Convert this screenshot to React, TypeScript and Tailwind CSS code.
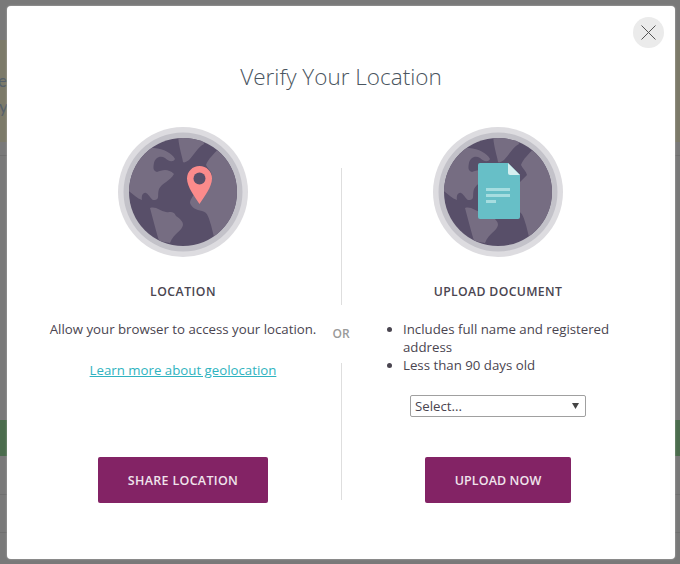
import React from "react";

const Globe = ({ id, children }: { id: string; children?: React.ReactNode }) => (
  <svg width="130" height="130" viewBox="0 0 130 130">
    <defs>
      <clipPath id={id}>
        <circle cx="65" cy="65" r="54" />
      </clipPath>
    </defs>
    <circle cx="65" cy="65" r="65" fill="#dddce0" />
    <circle cx="65" cy="65" r="59.5" fill="#c3c2c9" />
    <circle cx="65" cy="65" r="54" fill="#584f69" />
    <g clipPath={`url(#${id})`} fill="#766d82">
      <path d="M60 8 L85 8 L86 17 C80 20 76 28 71 33 C68 35 66 36 65 35 C64 28 61 22 60 8Z" />
      <path d="M100 22 C96 27 90 32 88 38 C90 42 93 44 94 48 L80 62 C76 68 72 72 72 76 C74 81 78 83 84 84 C90 85 91 92 93 98 L96 110 L125 110 L125 20Z" />
      <path d="M8 62 L8 20 L30 20 L36 21 C46 22 54 26 57 32 C55 36 50 34 47 31 C42 28 37 31 36 36 C35 41 35 44 39 45 C44 43 50 41 56 47 C52 54 44 56 41 62 C39 68 42 72 37 73 C33 74 32 68 28 66 C25 65 23 69 24 73 C18 71 14 66 8 62Z" />
      <path d="M32 81 C38 79 42 84 48 85 C52 86 55 83 58 89 C62 92 65 94 65 98 C64 104 56 106 52 116 L41 114 C38 104 35 92 32 81Z" />
    </g>
    {children}
  </svg>
);

export default function App() {
  return (
    <div className="relative h-[564px] w-[680px] overflow-hidden bg-[#797979] font-['Open_Sans',sans-serif]">
      <div className="h-[40px]" />
      <div className="h-[102px] bg-[#7c7a69] pt-[28px] pl-[1px] font-['Lato',sans-serif] text-[17px] leading-[26px] text-[#55606b]">
        <p className="-ml-[3px]">e</p>
        <p className="-ml-[2px]">y</p>
      </div>
      <div className="mt-[13px] h-px bg-[#6f6f6f]" />
      <div className="mt-[264px] h-[36px] bg-[#4b6c4d]" />
      <div className="mt-[38px] h-px bg-[#6f6f6f]" />
      <div className="mt-[37px] h-px bg-[#6f6f6f]" />

      {/* dialog */}
      <div className="absolute left-[7px] top-[6px] flex h-[553px] w-[668px] flex-col rounded-[4px] bg-white px-[23px] shadow-[0_0_2px_rgba(255,255,255,0.5)]">
        <button className="absolute right-[11px] top-[11px] flex h-[31px] w-[31px] items-center justify-center rounded-full bg-[#ebebeb]">
          <svg width="15" height="15" viewBox="0 0 15 15" stroke="#555" strokeWidth="1" fill="none">
            <path d="M0.5 0.5 L14.5 14.5 M14.5 0.5 L0.5 14.5" />
          </svg>
        </button>

        <h1 className="mt-[54px] text-center font-['Open_Sans',sans-serif] text-[22.5px] font-light leading-[34px] text-[#4a5560]">
          Verify Your Location
        </h1>

        <div className="mt-[33px] flex flex-1 text-[13.25px] leading-[18px] text-[#4a4550]">
          <section className="flex w-[306px] flex-col items-center">
            <Globe id="globe-a">
              <path
                d="M81.5 39 C74.5 39 69 44.5 69 51.5 C69 60 77 70 81.5 77 C86 70 94 60 94 51.5 C94 44.5 88.5 39 81.5 39Z"
                fill="#fb8b8b"
              />
              <circle cx="81.5" cy="51.5" r="6" fill="#584f69" />
            </Globe>
            <h2 className="mt-[26px] text-[12.25px] font-semibold leading-[18px] tracking-[0.5px] text-[#4a4550]">
              LOCATION
            </h2>
            <p className="mt-[19px] whitespace-nowrap">Allow your browser to access your location.</p>
            <a className="mt-[23px] text-[#2fb3c0] underline">Learn more about geolocation</a>
            <button className="mt-auto mb-[56px] h-[46px] w-[170px] rounded-[2px] bg-[#832365] pt-px text-[12.5px] font-semibold tracking-[0.3px] text-[#f0e4ec]">
              SHARE LOCATION
            </button>
          </section>

          <div className="flex w-[10px] flex-col items-center">
            <div className="mt-[41px] h-[137px] w-px bg-[#dedede]" />
            <span className="my-[20px] text-[12px] font-semibold leading-[18px] text-[#9a9a9a]">OR</span>
            <div className="h-[137px] w-px bg-[#dedede]" />
          </div>

          <section className="flex w-[304px] flex-col items-center">
            <Globe id="globe-b">
              <path d="M47 36 H75 L87 48 V90 a2 2 0 0 1 -2 2 H47 a2 2 0 0 1 -2 -2 V38 a2 2 0 0 1 2 -2Z" fill="#67bfc7" />
              <path d="M75 36 L87 48 H77 a2 2 0 0 1 -2 -2Z" fill="#d5eff0" />
              <rect x="53" y="61" width="24" height="3" fill="#a6dde0" />
              <rect x="53" y="67" width="24" height="3" fill="#a6dde0" />
              <rect x="53" y="73" width="10" height="3" fill="#a6dde0" />
            </Globe>
            <h2 className="mt-[26px] text-[12.25px] font-semibold leading-[18px] tracking-[0.35px] text-[#4a4550]">
              UPLOAD DOCUMENT
            </h2>
            <ul className="mt-[19px] ml-[40px] w-[232px] list-disc self-start pl-[17px]">
              <li>Includes full name and registered address</li>
              <li>Less than 90 days old</li>
            </ul>
            <div className="mt-[21px] flex h-[22px] w-[176px] items-center justify-between rounded-[2px] border border-[#a0a0a0] pl-[4px] pr-[6px] text-[13.25px]">
              <span>Select...</span>
              <svg width="7" height="6" viewBox="0 0 7 6" fill="#444">
                <path d="M0 0 H7 L3.5 6Z" />
              </svg>
            </div>
            <button className="mt-auto mb-[56px] h-[46px] w-[146px] rounded-[2px] bg-[#832365] pt-px text-[12.5px] font-semibold tracking-[0.1px] text-[#f0e4ec]">
              UPLOAD NOW
            </button>
          </section>
        </div>
      </div>
    </div>
  );
}
